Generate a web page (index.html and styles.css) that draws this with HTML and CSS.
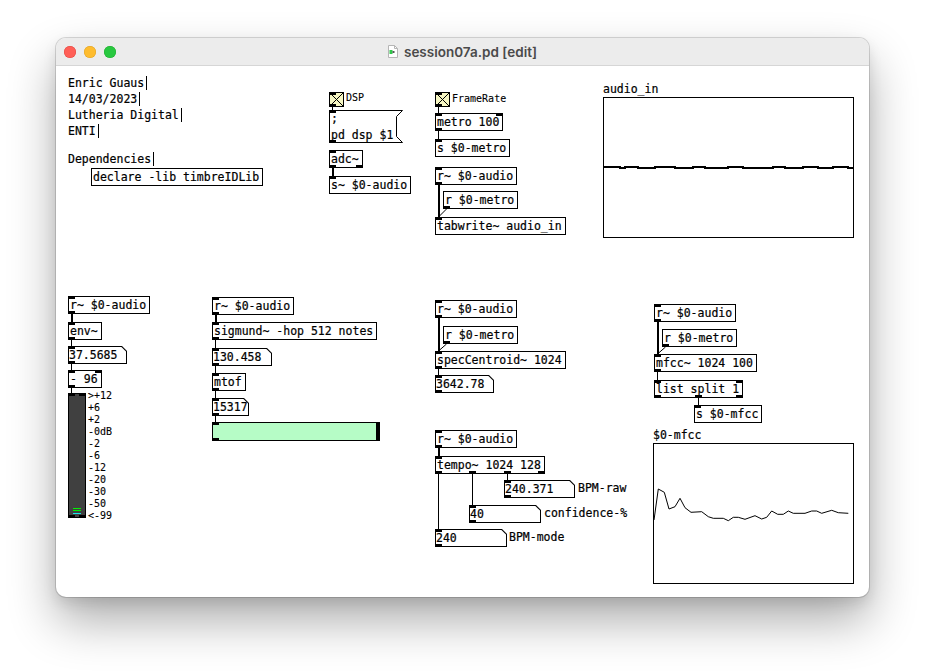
FILE: index.html
```html
<!DOCTYPE html>
<html>
<head>
<meta charset="utf-8">
<title>session07a.pd [edit]</title>
<link rel="stylesheet" href="styles.css">
</head>
<body>
<div class="window">
  <div class="titlebar">
    <div class="lights"><span class="light red"></span><span class="light yellow"></span><span class="light green"></span></div>
    <div class="title">
      <svg class="doc-icon" viewBox="0 0 10 13"><path d="M0.5 0.5H6.5L9.5 3.5V12.5H0.5Z" fill="#fff" stroke="#b5b5b5"/><path d="M6.5 0.5V3.5H9.5" fill="none" stroke="#b5b5b5"/><rect x="1.5" y="5" width="3" height="4" fill="#2fc84a"/><rect x="4.5" y="6" width="2" height="2" fill="#555"/></svg>
      <span>session07a.pd [edit]</span>
    </div>
    <div></div>
  </div>
  <div class="canvas">
    <svg class="wires" width="813" height="531" viewBox="0 0 813 531">
      <g class="w-ctl">
        <path d="M276.5 41V44"/>
        <path d="M382.5 41V47"/>
        <path d="M382.5 65V73"/>
        <path d="M390.5 143L382.5 151"/>
        <path d="M15.5 274V280"/>
        <path d="M15.5 298V304"/>
        <path d="M15.5 322V327"/>
        <path d="M159.5 274V282"/>
        <path d="M159.5 300V307"/>
        <path d="M159.5 325V332"/>
        <path d="M159.5 350V356"/>
        <path d="M390.5 278L382.5 285"/>
        <path d="M382.5 303V309"/>
        <path d="M382.5 408V463"/>
        <path d="M416.5 408V439"/>
        <path d="M451.5 408V414"/>
        <path d="M609.5 281L601.5 288"/>
        <path d="M601.5 306V314"/>
        <path d="M642.5 332V339"/>
      </g>
      <g class="w-sig">
        <path d="M277 102V110"/>
        <path d="M383 119V151"/>
        <path d="M16 248V256"/>
        <path d="M160 249V256"/>
        <path d="M383 252V285"/>
        <path d="M383 382V390"/>
        <path d="M602 256V288"/>
      </g>
    </svg>

    <div class="comment c-author">Enric Guaus</div>
    <div class="comment c-date">14/03/2023</div>
    <div class="comment c-course">Lutheria Digital</div>
    <div class="comment c-enti">ENTI</div>
    <div class="comment c-deps">Dependencies</div>
    <div class="obj o-declare">declare -lib timbreIDLib</div>

    <div class="tgl t-dsp"><svg class="tgl-x" viewBox="0 0 13 13"><path d="M0 0L13 13M13 0L0 13"/></svg><i class="io i l"></i><i class="io o l"></i></div>
    <div class="iemlabel l-dsp">DSP</div>
    <div class="msg m-dsp"><svg class="msg-frame" viewBox="0 0 74 33"><polygon points="0.5,0.5 73.5,0.5 67.5,6.5 67.5,26.5 73.5,32.5 0.5,32.5"/></svg><span class="msg-text">;
pd dsp $1</span><i class="io i l"></i><i class="io o l"></i></div>
    <div class="obj o-adc">adc~<i class="io i l"></i><i class="io o l"></i><i class="io o r"></i></div>
    <div class="obj o-sa">s~ $0-audio<i class="io i l"></i></div>

    <div class="tgl t-fr"><svg class="tgl-x" viewBox="0 0 13 13"><path d="M0 0L13 13M13 0L0 13"/></svg><i class="io i l"></i><i class="io o l"></i></div>
    <div class="iemlabel l-fr">FrameRate</div>
    <div class="obj o-metro">metro 100<i class="io i l"></i><i class="io i r"></i><i class="io o l"></i></div>
    <div class="obj o-sm">s $0-metro<i class="io i l"></i></div>
    <div class="obj o-ra1">r~ $0-audio<i class="io i l"></i><i class="io o l"></i></div>
    <div class="obj o-rm1">r $0-metro<i class="io o l"></i></div>
    <div class="obj o-tabw">tabwrite~ audio_in<i class="io i l"></i></div>

    <div class="arr-label al-audio">audio_in</div>
    <div class="garray g-audio">
      <svg class="plot" viewBox="0 0 249 139"><path class="wave" d="M0 69H16V70H21V69H34V70H51V69H71V70H89V69H101V70H124V69H139V70H169V69H181V70H199V69H214V70H229V69H244V70H249"/></svg>
    </div>

    <div class="obj o-ra2">r~ $0-audio<i class="io i l"></i><i class="io o l"></i></div>
    <div class="obj o-env">env~<i class="io i l"></i><i class="io o l"></i></div>
    <div class="atom a-env"><span class="atom-face">37.5685</span><i class="io i l"></i><i class="io o l"></i></div>
    <div class="obj o-minus">- 96<i class="io i l"></i><i class="io i r"></i><i class="io o l"></i></div>
    <div class="vu">
      <span class="led led-1"></span><span class="led led-2"></span><span class="led led-3"></span>
      <i class="io i l"></i><i class="io i r"></i><i class="io o l"></i><i class="io o r"></i>
    </div>
    <div class="vu-scale">
      <span>&gt;+12</span><span>+6</span><span>+2</span><span>-0dB</span><span>-2</span><span>-6</span><span>-12</span><span>-20</span><span>-30</span><span>-50</span><span>&lt;-99</span>
    </div>

    <div class="obj o-ra3">r~ $0-audio<i class="io i l"></i><i class="io o l"></i></div>
    <div class="obj o-sig">sigmund~ -hop 512 notes<i class="io i l"></i><i class="io o l"></i></div>
    <div class="atom a-pitch"><span class="atom-face">130.458</span><i class="io i l"></i><i class="io o l"></i></div>
    <div class="obj o-mtof">mtof<i class="io i l"></i><i class="io o l"></i></div>
    <div class="atom a-freq"><span class="atom-face">15317</span><i class="io i l"></i><i class="io o l"></i></div>
    <div class="hsl"><span class="hsl-knob"></span><i class="io i l"></i><i class="io o l"></i></div>

    <div class="obj o-ra4">r~ $0-audio<i class="io i l"></i><i class="io o l"></i></div>
    <div class="obj o-rm2">r $0-metro<i class="io o l"></i></div>
    <div class="obj o-spec">specCentroid~ 1024<i class="io i l"></i><i class="io o l"></i></div>
    <div class="atom a-spec"><span class="atom-face">3642.78</span><i class="io i l"></i><i class="io o l"></i></div>

    <div class="obj o-ra5">r~ $0-audio<i class="io i l"></i><i class="io o l"></i></div>
    <div class="obj o-tempo">tempo~ 1024 128<i class="io i l"></i><i class="io o l"></i><i class="io o t1"></i><i class="io o t2"></i><i class="io o r"></i></div>
    <div class="atom a-raw"><span class="atom-face">240.371</span><i class="io i l"></i><i class="io o l"></i></div>
    <div class="label lb-raw">BPM-raw</div>
    <div class="atom a-conf"><span class="atom-face">40</span><i class="io i l"></i><i class="io o l"></i></div>
    <div class="label lb-conf">confidence-%</div>
    <div class="atom a-mode"><span class="atom-face">240</span><i class="io i l"></i><i class="io o l"></i></div>
    <div class="label lb-mode">BPM-mode</div>

    <div class="obj o-ra6">r~ $0-audio<i class="io i l"></i><i class="io o l"></i></div>
    <div class="obj o-rm3">r $0-metro<i class="io o l"></i></div>
    <div class="obj o-mfcc">mfcc~ 1024 100<i class="io i l"></i><i class="io o l"></i></div>
    <div class="obj o-split">list split 1<i class="io i l"></i><i class="io i r"></i><i class="io o l"></i><i class="io o m"></i><i class="io o r"></i></div>
    <div class="obj o-smfcc">s $0-mfcc<i class="io i l"></i></div>

    <div class="arr-label al-mfcc">$0-mfcc</div>
    <div class="garray g-mfcc">
      <svg class="plot" viewBox="0 0 199 139"><polyline class="curve" points="0,76 4.3,45 10.3,48.3 15,65 21,62.7 26,54.3 31,63.7 37,68.3 47.7,67.7 54.3,72.7 59.3,74.3 69.3,74.3 74.3,76.7 79.3,73.3 84.3,73.3 91,75.3 101,71.7 107.7,75 112.7,73.3 117.7,67 123.7,70.3 129.3,70.3 134.3,67 139.3,69.3 151,69.3 157.7,67 162.7,67 167.7,69.3 177.7,66.3 184.3,68.7 194.3,69.3"/></svg>
    </div>
  </div>
</div>
</body>
</html>
```

FILE: styles.css
```css
* { box-sizing: border-box; }
html, body { margin: 0; padding: 0; background: #ffffff; }
body { width: 925px; height: 672px; overflow: hidden; padding: 38px 0 0 56px; }

.window {
  width: 813px; height: 559px; border-radius: 10px; background: #fff; overflow: hidden;
  display: flex; flex-direction: column;
  box-shadow: 0 0 0 1px rgba(0,0,0,0.14), 0 24px 48px rgba(0,0,0,0.32), 0 6px 14px rgba(0,0,0,0.10);
}
.titlebar {
  flex: none; height: 28px; background: #ececec; border-bottom: 1px solid #d6d6d6;
  display: grid; grid-template-columns: 1fr auto 1fr; align-items: center;
}
.lights { display: flex; gap: 8px; padding-left: 8px; }
.light { width: 12px; height: 12px; border-radius: 50%; }
.red { background: #ff5f57; box-shadow: inset 0 0 0 0.5px #e2463f; }
.yellow { background: #febc2e; box-shadow: inset 0 0 0 0.5px #dfa123; }
.green { background: #28c840; box-shadow: inset 0 0 0 0.5px #1dad2b; }
.title {
  display: flex; align-items: center; gap: 6px;
  font-family: Inter, Roboto, "Liberation Sans", sans-serif; font-weight: 600; font-size: 13.5px; color: #4a4a4a;
}
.doc-icon { width: 10px; height: 13px; }

.canvas { flex: 1; position: relative; font-family: "DejaVu Sans Mono", monospace; font-size: 11.5px; color: #000; -webkit-text-stroke: 0.2px #000; }
.wires { position: absolute; left: 0; top: 0; }
.wires path { fill: none; stroke: #000; }
.w-ctl path { stroke-width: 1; }
.w-sig path { stroke-width: 2; }

.comment { position: absolute; left: 12px; line-height: 14px; height: 14px; padding-right: 2px; border-right: 1px solid #000; white-space: pre; }
.c-author { top: 10px; }
.c-date { top: 26px; }
.c-course { top: 42px; }
.c-enti { top: 58px; }
.c-deps { top: 86px; }

.obj { position: absolute; height: 18px; border: 1px solid #000; padding: 0 3px 0 1px; line-height: 16px; white-space: pre; background: #fff; }
.io { position: absolute; width: 7px; height: 3px; background: #000; }
.io.i { top: -1px; }
.io.o { bottom: -1px; }
.io.l { left: -1px; }
.io.r { right: -1px; }

.o-declare { left: 35px; top: 102px; }
.o-adc { left: 273px; top: 84px; }
.o-sa { left: 273px; top: 110px; }
.o-metro { left: 379px; top: 47px; }
.o-sm { left: 379px; top: 73px; }
.o-ra1 { left: 379px; top: 101px; }
.o-rm1 { left: 387px; top: 125px; }
.o-tabw { left: 379px; top: 151px; }
.o-ra2 { left: 12px; top: 230px; }
.o-env { left: 12px; top: 256px; }
.o-minus { left: 12px; top: 304px; }
.o-ra3 { left: 156px; top: 231px; }
.o-sig { left: 156px; top: 256px; }
.o-mtof { left: 156px; top: 307px; }
.o-ra4 { left: 379px; top: 234px; }
.o-rm2 { left: 387px; top: 260px; }
.o-spec { left: 379px; top: 285px; }
.o-ra5 { left: 379px; top: 364px; }
.o-tempo { left: 379px; top: 390px; }
.o-tempo .t1 { left: 33px; }
.o-tempo .t2 { left: 68px; }
.o-ra6 { left: 598px; top: 238px; }
.o-rm3 { left: 606px; top: 263px; }
.o-mfcc { left: 598px; top: 288px; }
.o-split { left: 598px; top: 314px; }
.o-split .m { left: 40px; }
.o-smfcc { left: 638px; top: 339px; }

.tgl { position: absolute; width: 15px; height: 15px; border: 1px solid #000; background: #f7f7c3; }
.tgl-x { position: absolute; left: 0; top: 0; width: 13px; height: 13px; }
.tgl-x path { stroke: #000; stroke-width: 1; fill: none; }
.t-dsp { left: 273px; top: 26px; }
.t-fr { left: 379px; top: 26px; }
.iemlabel { position: absolute; font-size: 10px; line-height: 12px; white-space: pre; -webkit-text-stroke: 0.1px #000; }
.l-dsp { left: 290px; top: 26px; }
.l-fr { left: 396px; top: 27px; }

.msg { position: absolute; width: 74px; height: 33px; padding: 0 0 0 2px; line-height: 16.5px; white-space: pre; }
.msg-frame { position: absolute; left: 0; top: 0; width: 74px; height: 33px; }
.msg-frame polygon { fill: #fff; stroke: #000; stroke-width: 1; }
.msg-text { position: relative; }
.msg .io.i { top: 0; }
.msg .io.o { bottom: 0; }
.msg .io.l { left: 0; }
.m-dsp { left: 273px; top: 44px; }

.atom { position: absolute; height: 18px; background: #000; clip-path: polygon(0 0, calc(100% - 5px) 0, 100% 5px, 100% 100%, 0 100%); }
.atom-face { position: absolute; left: 1px; top: 1px; right: 1px; bottom: 1px; background: #fff; line-height: 16px; padding-left: 0; white-space: pre; clip-path: polygon(0 0, calc(100% - 4.6px) 0, 100% 4.6px, 100% 100%, 0 100%); }
.atom .io.i { top: 0; }
.atom .io.o { bottom: 0; }
.atom .io.l { left: 0; }
.a-env { left: 12px; top: 280px; width: 59px; }
.a-pitch { left: 156px; top: 282px; width: 60px; }
.a-freq { left: 156px; top: 332px; width: 37px; }
.a-spec { left: 379px; top: 309px; width: 59px; }
.a-raw { left: 448px; top: 414px; width: 71px; }
.a-conf { left: 413px; top: 439px; width: 72px; }
.a-mode { left: 379px; top: 463px; width: 72px; }

.label { position: absolute; line-height: 16px; white-space: pre; }
.lb-raw { left: 522px; top: 414px; }
.lb-conf { left: 488px; top: 439px; }
.lb-mode { left: 453px; top: 463px; }

.vu { position: absolute; left: 12px; top: 327px; width: 18px; height: 125px; background: #404040; border: 1px solid #000; }
.led { position: absolute; left: 4px; width: 8px; height: 1px; }
.led-1 { top: 114px; background: #00f000; }
.led-2 { top: 116px; background: #00f000; }
.led-3 { top: 119px; background: #14e8e8; }
.vu-scale { position: absolute; left: 32px; top: 324px; display: flex; flex-direction: column; font-size: 10px; line-height: 12px; white-space: pre; -webkit-text-stroke: 0.1px #000; }

.hsl { position: absolute; left: 156px; top: 356px; width: 168px; height: 19px; background: #b6fcc6; border: 1px solid #000; }
.hsl-knob { position: absolute; right: 0; top: 0; bottom: 0; width: 3px; background: #000; }

.arr-label { position: absolute; line-height: 16px; white-space: pre; }
.al-audio { left: 547px; top: 15px; }
.al-mfcc { left: 597px; top: 361px; }
.garray { position: absolute; border: 1px solid #000; background: #fff; }
.g-audio { left: 547px; top: 31px; width: 251px; height: 141px; }
.g-mfcc { left: 597px; top: 377px; width: 201px; height: 141px; }
.plot { position: absolute; left: 0; top: 0; width: 100%; height: 100%; }
.wave { fill: none; stroke: #000; stroke-width: 2; shape-rendering: crispEdges; }
.curve { fill: none; stroke: #000; stroke-width: 1; }
```
